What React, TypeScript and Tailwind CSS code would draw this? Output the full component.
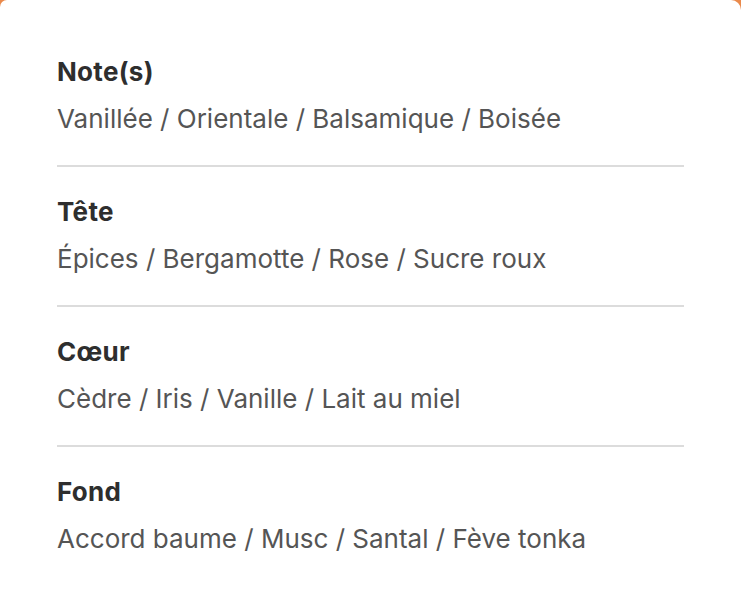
import React from "react";

const sections = [
  { title: "Note(s)", body: "Vanillée / Orientale / Balsamique / Boisée" },
  { title: "Tête", body: "Épices / Bergamotte / Rose / Sucre roux" },
  { title: "Cœur", body: "Cèdre / Iris / Vanille / Lait au miel" },
  { title: "Fond", body: "Accord baume / Musc / Santal / Fève tonka" },
];

export default function App() {
  return (
    <div className="h-[605px] w-[741px] overflow-hidden bg-[#ea8a4c]">
      <div
        className="h-full w-full rounded-tl-[7px] rounded-tr-[10px] bg-white pl-[57px] pr-[57px] pt-[54px]"
        style={{ fontFamily: "Inter, 'Noto Sans', sans-serif" }}
      >
        {sections.map((s, i) => (
          <div
            key={s.title}
            className={
              i < sections.length - 1
                ? "border-b-2 border-[#dcdcdc] pb-[28px] mb-[27px]"
                : ""
            }
          >
            <div className="text-[26px] leading-[36px] font-bold tracking-[0.3px] text-[#2e2e2e]">
              {s.title}
            </div>
            <div className="mt-[11px] text-[26px] leading-[36px] font-normal text-[#555555]">
              {s.body}
            </div>
          </div>
        ))}
      </div>
    </div>
  );
}
